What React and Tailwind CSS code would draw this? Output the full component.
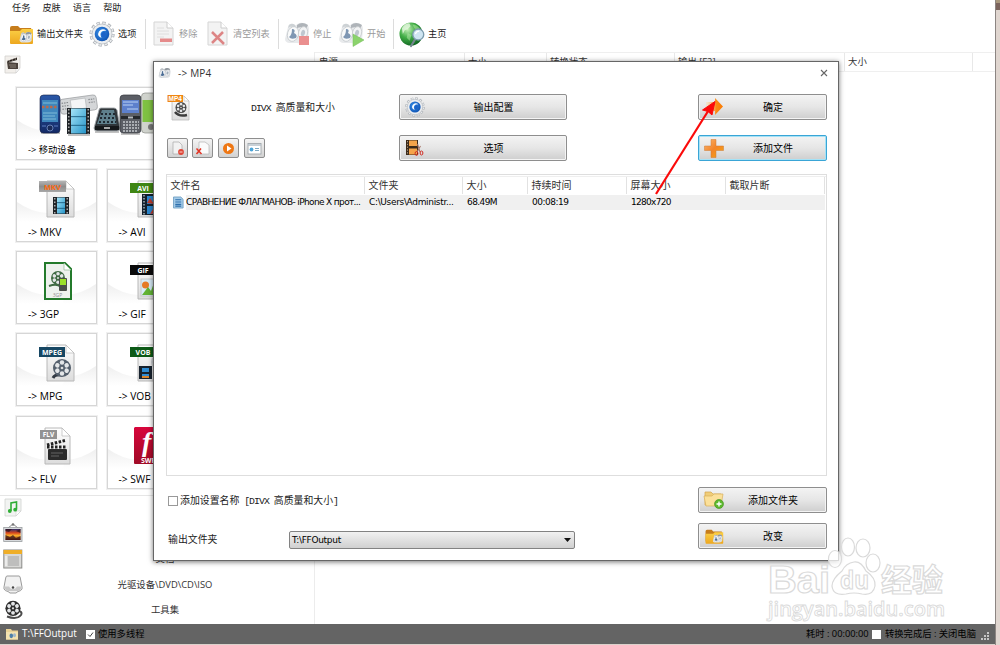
import React from 'react';
import clsx from 'clsx';

const uiFont = "font-['Open_Sans','Noto_Sans_CJK_SC',sans-serif]";
const monoFont = "font-['Liberation_Mono','Noto_Sans_CJK_SC',monospace]";
const tahomaFont = "font-['DejaVu_Sans','Noto_Sans_CJK_SC',sans-serif]";

/* ---------- Shared gradients ---------- */

const Gradients = () => (
  <svg className="absolute w-0 h-0" aria-hidden="true">
    <defs>
      <linearGradient id="folder" x1="0" y1="0" x2="0" y2="1">
        <stop offset="0" stopColor="#fbd046" />
        <stop offset="1" stopColor="#eda71f" />
      </linearGradient>
      <linearGradient id="orange" x1="0" y1="0" x2="1" y2="1">
        <stop offset="0" stopColor="#fbb873" />
        <stop offset="0.5" stopColor="#f3852a" />
        <stop offset="1" stopColor="#f5a80c" />
      </linearGradient>
      <linearGradient id="arrow" x1="0" y1="0" x2="1" y2="0">
        <stop offset="0" stopColor="#ffd9a0" stopOpacity="0.3" />
        <stop offset="0.6" stopColor="#fb8a14" />
        <stop offset="1" stopColor="#fb7a00" />
      </linearGradient>
      <linearGradient id="page" x1="0" y1="0" x2="0" y2="1">
        <stop offset="0" stopColor="#ffffff" />
        <stop offset="1" stopColor="#dcdcdc" />
      </linearGradient>
      <linearGradient id="hill" x1="0" y1="0" x2="0" y2="1">
        <stop offset="0" stopColor="#efefef" />
        <stop offset="1" stopColor="#ffffff" />
      </linearGradient>
      <linearGradient id="film" x1="0" y1="0" x2="1" y2="1">
        <stop offset="0" stopColor="#a5e4f8" />
        <stop offset="1" stopColor="#2795c9" />
      </linearGradient>
      <linearGradient id="red" x1="0" y1="0" x2="0" y2="1">
        <stop offset="0" stopColor="#d8063c" />
        <stop offset="1" stopColor="#a00b26" />
      </linearGradient>
      <linearGradient id="sunset" x1="0" y1="0" x2="0" y2="1">
        <stop offset="0" stopColor="#2d2e6c" />
        <stop offset="0.35" stopColor="#d8461c" />
        <stop offset="0.6" stopColor="#fbb02c" />
        <stop offset="1" stopColor="#7a1a0c" />
      </linearGradient>
      <radialGradient id="globe" cx="0.35" cy="0.3" r="0.8">
        <stop offset="0" stopColor="#c4efb8" />
        <stop offset="0.45" stopColor="#41ad46" />
        <stop offset="1" stopColor="#08591b" />
      </radialGradient>
      <radialGradient id="blue" cx="0.4" cy="0.4" r="0.7">
        <stop offset="0" stopColor="#3a93ea" />
        <stop offset="1" stopColor="#0a4cae" />
      </radialGradient>
      <linearGradient id="navy" x1="0" y1="0" x2="0" y2="1">
        <stop offset="0" stopColor="#2a58a8" />
        <stop offset="1" stopColor="#142a66" />
      </linearGradient>
      <linearGradient id="metal" x1="0" y1="0" x2="0" y2="1">
        <stop offset="0" stopColor="#b5b5b5" />
        <stop offset="0.5" stopColor="#8d8d8d" />
        <stop offset="1" stopColor="#a8a8a8" />
      </linearGradient>
    </defs>
  </svg>
);

/* ---------- Icons ---------- */

const FactoryShape = () => (
  <>
    <path d="M1 18 4 6Q5 2 9 3L11 6Q14 1 19 2Q25 3 25 8L24 19Q20 23 13 22L5 22Q1 21 1 18Z" fill="#dfe2e5" />
    <path d="M5 4Q9 1 12 5L10 7Q7 4 4 7Z" fill="#b9bfc4" />
    <path d="M13 4Q18 0 24 4L22 8Q18 5 13 7Z" fill="#8e959c" />
    <ellipse cx="9" cy="13" rx="5.500" ry="7.500" fill="#f7f8f9" stroke="#a6acb2" strokeWidth="0.7" transform="rotate(15 9 13)" />
    <path d="M8 8Q12 8 10 12Q14 14 12 17Q7 19 5 16Q8 14 8 8Z" fill="#4a6c94" />
    <ellipse cx="19" cy="12" rx="4.500" ry="6.500" fill="#eef0f2" stroke="#abb0b5" strokeWidth="0.7" transform="rotate(15 19 12)" />
    <ellipse cx="19" cy="12" rx="2" ry="3.200" fill="#a5b0bc" transform="rotate(15 19 12)" />
  </>
);

const FactoryIcon = ({ size = 26, badge, faded }) => (
  <svg width={size} height={size} viewBox="0 0 26 26">
    <g opacity={faded ? 0.7 : 1}><FactoryShape /></g>
    {badge === 'stop' && <rect x="15" y="15" width="10" height="9" fill="#ea8f8f" />}
    {badge === 'start' && <path d="M15 13 26 19 15 25.500Z" fill="#8bd36c" stroke="#74bd58" strokeWidth="0.5" />}
  </svg>
);

const FolderIcon = ({ width = 26, height = 26 }) => (
  <svg width={width} height={height} viewBox="0 0 26 26">
    <path d="M2 7Q2 5 4 5H10L12 7H23L24 10V20H2Z" fill="#c67d1c" />
    <path d="M2 10H12L14 8H25V22Q25 23 24 23H3Q2 23 2 22Z" fill="url(#folder)" />
    <g transform="translate(11 10) scale(0.52)"><FactoryShape /></g>
  </svg>
);

const GearIcon = ({ size = 26 }) => (
  <svg width={size} height={size} viewBox="0 0 26 26">
    <circle cx="13" cy="13" r="11" fill="none" stroke="#a6abb1" strokeWidth="3.200" strokeDasharray="3.200 2.560" />
    <circle cx="13" cy="13" r="11" fill="none" stroke="#e9ebed" strokeWidth="1.800" strokeDasharray="2.200 3.560" strokeDashoffset="-0.5" />
    <circle cx="13" cy="13" r="10" fill="#eceef0" stroke="#b9bec3" strokeWidth="0.8" />
    <circle cx="13" cy="13" r="7.300" fill="url(#blue)" />
    <path d="M17.500 9.500Q13 6.500 10 10.500Q7.500 15 12.500 17Q9 9.500 17.500 9.500Z" fill="#ffffff" />
    <path d="M12 13Q15 8 17 13Q16 17 13 16Z" fill="#1c63c8" />
  </svg>
);

const RemoveIcon = () => (
  <svg width="26" height="26" viewBox="0 0 26 26">
    <path d="M4 1H17L23 7V24H4Z" fill="#f3f3f3" stroke="#d5d5d5" />
    <path d="M17 1V7H23" fill="#ffffff" stroke="#cccccc" />
    <path d="M7 7H14M7 10H19M7 13H19M7 16H14" stroke="#dedede" />
    <rect x="10" y="17.500" width="12" height="3.500" fill="#e58b8b" />
  </svg>
);

const ClearIcon = () => (
  <svg width="26" height="26" viewBox="0 0 26 26">
    <path d="M4 1H17L23 7V24H4Z" fill="#f3f3f3" stroke="#d5d5d5" />
    <path d="M17 1V7H23" fill="#ffffff" stroke="#cccccc" />
    <path d="M8 11 20 23M19 11 8 22" stroke="#dd8585" strokeWidth="2.500" />
  </svg>
);

const GlobeIcon = () => (
  <svg width="27" height="27" viewBox="0 0 27 27">
    <circle cx="12.500" cy="13" r="12" fill="url(#globe)" />
    <path d="M3 7Q7 1 11 2L12 5L9 8L6 9L4 13Z" fill="#e6f8e0" opacity="0.8" />
    <path d="M14 3Q19 3 22 8L19 9L16 7Z" fill="#a8e59a" opacity="0.6" />
    <path d="M9 12 13 14 11 20 8 17Z" fill="#b8ecac" opacity="0.5" />
    <path d="M17 18 12.500 25.500" stroke="#74848f" strokeWidth="2.200" strokeLinecap="round" />
    <circle cx="20" cy="13.500" r="5.700" fill="#cfe5f2" stroke="#7d9cae" strokeWidth="1.400" />
    <path d="M17 13Q18 10 21 10" stroke="#ffffff" strokeWidth="1.200" fill="none" />
  </svg>
);

const Reel = ({ cx, cy, r, color = '#333333' }) => (
  <g transform={`translate(${cx} ${cy}) scale(${r / 10})`}>
    <circle r="10" fill={color} />
    {[0, 60, 120, 180, 240, 300].map((a) => (
      <circle key={a} r="2.500" cy="-6" fill="#e4e6e8" transform={`rotate(${a})`} />
    ))}
    <circle r="1.500" fill="#dddddd" />
  </g>
);

const Film = ({ x, y, w, h }) => (
  <g>
    <rect x={x} y={y} width={w} height={h} fill="#202428" />
    <path d={`M${x + 1.8} ${y + 1}V${y + h}M${x + w - 1.8} ${y + 1}V${y + h}`} stroke="#d0d0d0" strokeWidth="1.200" strokeDasharray="1.500 2" />
    <rect x={x + 4} y={y + 0.5} width={w - 8} height={h - 1} fill="url(#film)" />
    <path d={`M${x + 4} ${y + h / 3}H${x + w - 4}M${x + 4} ${y + (h * 2) / 3}H${x + w - 4}`} stroke="#1b5d80" strokeWidth="0.900" />
  </g>
);

const Mp4Icon = () => (
  <svg width="24" height="28" viewBox="0 0 24 28">
    <path d="M6 2H18L23 7V26H6Z" fill="url(#page)" stroke="#bdbdbd" strokeWidth="0.8" />
    <path d="M18 2V7H23Z" fill="#ffffff" stroke="#bbbbbb" strokeWidth="0.6" />
    <Reel cx={15} cy={13.5} r={5.5} color="#444444" />
    <path d="M9 18Q13 23 21 21" stroke="#3c3c3c" strokeWidth="2.500" fill="none" />
    <rect x="1.500" y="1" width="15.500" height="7" fill="#ef8613" />
    <text x="9.200" y="7" textAnchor="middle" fontSize="6.500" fontWeight="bold" fill="#ffffff" fontFamily="Liberation Sans, sans-serif">MP4</text>
  </svg>
);

const ClapperIcon = () => (
  <svg width="18" height="19" viewBox="0 0 18 19">
    <path d="M1 1H16V13L12 18H1Z" fill="#f2efeb" stroke="#d2d0cd" strokeWidth="0.8" />
    <path d="M12 18V13H16Z" fill="#ffffff" stroke="#cccccc" strokeWidth="0.6" />
    <path d="M3 7 14 8V14H4Z" fill="#4b423c" />
    <path d="M3 6 13 2.500V5L4 7.500Z" fill="#2b2521" />
    <path d="M5 5 6 7M8 4 9 6M11 3 12 5M5 10H12M6 12H12" stroke="#a69b90" strokeWidth="0.700" />
  </svg>
);

const MusicIcon = () => (
  <svg width="18" height="19" viewBox="0 0 18 19">
    <path d="M1 1H17V13L12 18H1Z" fill="#f2f4f2" stroke="#d0d3d0" strokeWidth="0.8" />
    <path d="M12 18V13H17Z" fill="#ffffff" stroke="#cccccc" strokeWidth="0.6" />
    <path d="M7 13V5L12.500 4V11.500" stroke="#2fae35" strokeWidth="1.600" fill="none" />
    <circle cx="5.800" cy="13" r="1.900" fill="#2fae35" />
    <circle cx="11.200" cy="11.700" r="1.900" fill="#2fae35" />
  </svg>
);

const PictureIcon = () => (
  <svg width="20" height="20" viewBox="0 0 20 20">
    <path d="M5 5 10 1 15 5" stroke="#8a8a8a" fill="none" />
    <circle cx="10" cy="1.500" r="1.300" fill="#777777" />
    <rect x="0.700" y="4.500" width="18.300" height="14" fill="#d7dadd" stroke="#9a9da0" strokeWidth="0.8" />
    <rect x="2.500" y="6" width="15" height="11" fill="url(#sunset)" />
    <path d="M2.500 6H9L6 9L2.500 8ZM17.500 6V10L13 8ZM2.500 17V12L7 14L10 12L13 15L17.500 13V17Z" fill="#2c1018" opacity="0.7" />
  </svg>
);

const DocumentIcon = () => (
  <svg width="20" height="20" viewBox="0 0 20 20">
    <rect x="0.800" y="1" width="18" height="18" fill="#d9d9d7" stroke="#8b8b88" />
    <rect x="0.500" y="1" width="18.500" height="4" fill="#efae28" />
    <path d="M5 8H16M5 10H16M5 12H16M5 14H16M5 16H16" stroke="#b5b5b5" strokeWidth="1.300" />
    <path d="M3 7V17" stroke="#ffffff" />
  </svg>
);

const DriveIcon = () => (
  <svg width="20" height="19" viewBox="0 0 20 19">
    <path d="M4 1H16Q17 1 17.300 3L19 12V14Q18 16 15 16.500L13 18H7L5 16.500Q2 16 1 14V12L2.700 3Q3 1 4 1Z" fill="#f1f1f1" stroke="#9a9a9a" />
    <path d="M1.500 11.500H6Q7 14 10 14T14 11.500H18.500V14L15 16H5L1.500 14Z" fill="#c9c9c9" />
    <circle cx="10" cy="12.500" r="1.200" fill="#444444" />
  </svg>
);

const ToolsetIcon = () => (
  <svg width="20" height="20" viewBox="0 0 20 20">
    <path d="M14 11Q20 11 18 15Q14 20 4 16.500" stroke="#4c4c4c" strokeWidth="2" fill="none" />
    <Reel cx={10} cy={8.3} r={7.6} color="#2e2e2e" />
  </svg>
);

/* ---------- Format artwork, drawn on a 79x54 tile ---------- */

const Hills = ({ width = 79 }) => (
  <>
    <path d="M0 32Q14 42 30 43L34 52H0Z" fill="url(#hill)" />
    <path d={`M${width} 32Q${width - 14} 42 ${width - 30} 43L${width - 34} 52H${width}Z`} fill="url(#hill)" />
  </>
);

const Sheet = ({ x = 30, w = 27, fill = 'url(#page)', stroke = '#b8b8b8' }) => (
  <>
    <path d={`M${x} 11H${x + w - 8}L${x + w} 19V47H${x}Z`} fill={fill} stroke={stroke} strokeWidth="1" />
    <path d={`M${x + w - 8} 11V19H${x + w}Z`} fill="#ffffff" stroke={stroke} strokeWidth="0.700" />
  </>
);

const Banner = ({ label, fill, color = '#ffffff', x = 22, y = 13, w = 26, h = 10, size = 7 }) => (
  <>
    <rect x={x} y={y} width={w} height={h} fill={fill} />
    <text x={x + w / 2} y={y + h - 2.4} textAnchor="middle" fontSize={size} fontWeight="bold" fill={color} fontFamily="Open Sans, sans-serif">
      {label}
    </text>
  </>
);

const MkvArt = () => (
  <>
    <Sheet />
    <Film x={36} y={27} w={16} h={17} />
    <Banner label="MKV" fill="url(#metal)" color="#ff6a10" y={11} w={27} h={11} size={7.5} />
  </>
);

const AviArt = () => (
  <>
    <Sheet />
    <rect x="34" y="24" width="22" height="21" fill="#14202c" />
    <path d="M36 25V45" stroke="#a8b4bc" strokeWidth="1.500" strokeDasharray="1.500 1.500" />
    <path d="M39 26H54V34H39ZM39 36H54V44H39Z" fill="#2b86cc" />
    <path d="M39 33 42 28 46 34ZM42 44 45 39 48 43Z" fill="#c23b2b" />
    <Banner label="AVI" fill="#3f8614" />
  </>
);

const ThreeGpArt = () => (
  <>
    <path d="M28 11H48L54 17V47H28Z" fill="#eef2ee" stroke="#237a2b" strokeWidth="2" />
    <path d="M47 11V18H54Z" fill="#ffffff" stroke="#8fb893" strokeWidth="0.700" />
    <Reel cx={41} cy={26} r={7} color="#3f6b43" />
    <path d="M32 34Q40 31 44 35" stroke="#3f6b43" strokeWidth="2" fill="none" />
    <rect x="42" y="26" width="8" height="13" rx="1" fill="#4a4f4a" />
    <rect x="43" y="27" width="6" height="6" fill="#9be02a" />
    <text x="40.500" y="44.500" textAnchor="middle" fontSize="5" fill="#8e8e8e" fontFamily="Open Sans, sans-serif">3GP</text>
  </>
);

const GifArt = () => (
  <>
    <Sheet />
    <rect x="33" y="27" width="23" height="17" fill="#d8ecf8" stroke="#c8c8c8" />
    <circle cx="37.500" cy="33" r="3.500" fill="#e67a26" />
    <path d="M34 43 40 35 43 39 47 28 52 43Z" fill="#62b334" />
    <Banner label="GIF" fill="#0a0a0a" />
  </>
);

const MpgArt = () => (
  <>
    <Sheet />
    <path d="M36 44Q38 40 45 41" stroke="#333a44" strokeWidth="3" fill="none" />
    <Reel cx={45} cy={34} r={9} color="#55606d" />
    <Banner label="MPEG" fill="#174763" />
  </>
);

const VobArt = () => (
  <>
    <Sheet />
    <Reel cx={50} cy={28} r={7} color="#c9ccd0" />
    <rect x="31" y="32" width="13" height="13" fill="#17222e" />
    <path d="M34 34H41V38H34ZM34 40H41V44H34Z" fill="#2d8bd2" />
    <path d="M34 42H41V44H34Z" fill="#d8842c" />
    <Banner label="VOB" fill="#0d5a17" />
  </>
);

const FlvArt = () => (
  <>
    <Sheet x={28} w={25} />
    <rect x="31" y="32" width="19" height="11" rx="1" fill="#2b2b2b" />
    <path d="M30 30H50" stroke="#222222" strokeWidth="3" strokeDasharray="2.500 1.500" />
    <path d="M30 28 48 23.500" stroke="#222222" strokeWidth="3" strokeDasharray="2.500 1.500" />
    <path d="M34 36H46M34 39H42" stroke="#8b8b8b" strokeWidth="0.600" />
    <Banner label="FLV" fill="#929292" x={23} y={13} w={17} h={9} size={6.5} />
  </>
);

const SwfArt = () => (
  <>
    <path d="M27 10H48L56 18V47H27Q26 47 26 46V11Z" fill="url(#red)" />
    <text x="34" y="34" fontSize="28" fontStyle="italic" fontWeight="bold" fill="#ffffff" fontFamily="Liberation Serif, serif">f</text>
    <text x="33" y="45.500" fontSize="7" fontWeight="bold" fill="#ffffff" fontFamily="Open Sans, sans-serif">SWF</text>
  </>
);

const DevicesArt = () => (
  <>
    <path d="M24 45H43M51 47H73M78 44H102M104 46H123" stroke="#9a9a9a" strokeWidth="2" opacity="0.6" />
    <g transform="rotate(-8 62 17)">
      <rect x="43" y="9" width="37" height="15" rx="3" fill="#d4d6d8" stroke="#999c9f" strokeWidth="0.700" />
      <rect x="54" y="11" width="15" height="10" fill="#f4f5f6" stroke="#a2a5a8" strokeWidth="0.500" />
      <path d="M45 13H52M45 16H52M45 19H52M72 13H78M72 16H78" stroke="#8a8d90" strokeWidth="1.200" strokeDasharray="1.500 1" />
    </g>
    <rect x="23" y="7" width="20" height="38" rx="3.500" fill="url(#navy)" stroke="#101d40" strokeWidth="0.600" />
    <rect x="25" y="12" width="16" height="22" fill="#3f87bd" />
    <path d="M25 19H41" stroke="#b9694c" strokeWidth="2.500" strokeDasharray="2.500 1.500" />
    <path d="M26 15H40M26 25H40M26 28H38M26 31H39" stroke="#8fcae0" strokeWidth="0.800" />
    <circle cx="33" cy="40" r="3" fill="#1b2b58" stroke="#87a2d8" strokeWidth="0.700" />
    <path d="M25 38H29M37 38H41" stroke="#5d7cc0" />
    <Film x={50} y={20} w={23} h={26} />
    <path d="M84 20H97Q99 20 100 22L103 40Q103 43 100 43H80Q77 43 77 40L82 22Q82 20 84 20Z" fill="#30363a" stroke="#a3a8ac" strokeWidth="0.900" />
    <path d="M85 22H97L99.500 36H80Z" fill="#5f808c" />
    <path d="M84 26H98M83 30H99M82 34H99" stroke="#202a32" strokeWidth="1.800" strokeDasharray="2 2" />
    <path d="M78 38H102V42H78Z" fill="#16191b" />
    <path d="M87 40H93" stroke="#d8d8d8" strokeWidth="1.500" />
    <rect x="103" y="7" width="21" height="38" rx="3.500" fill="#5b5e65" stroke="#34373c" strokeWidth="0.700" />
    <rect x="105" y="12" width="17" height="13" fill="#5d80cc" />
    <path d="M106 14H121M106 17H116M110 21H121" stroke="#c5dbf8" strokeWidth="0.900" />
    <path d="M104 28H123V31H104Z" fill="#25282c" />
    <path d="M111 29.500H116" stroke="#b5b8bc" strokeWidth="2" />
    <path d="M106 34H122M106 37H122M106 40H122M106 43H120" stroke="#c4c7cb" strokeWidth="1.500" strokeDasharray="2 1" />
    <rect x="124.500" y="5" width="20" height="40" rx="3.500" fill="#d0d3cd" stroke="#8a8d88" strokeWidth="0.700" />
    <rect x="125.500" y="12" width="17" height="22" fill="#7fc242" />
    <circle cx="134" cy="39" r="3" fill="#777777" />
  </>
);

const formats = [
  { name: 'MKV', Art: MkvArt },
  { name: 'AVI', Art: AviArt },
  { name: '3GP', Art: ThreeGpArt },
  { name: 'GIF', Art: GifArt },
  { name: 'MPG', Art: MpgArt },
  { name: 'VOB', Art: VobArt },
  { name: 'FLV', Art: FlvArt },
  { name: 'SWF', Art: SwfArt },
];

const FormatCard = ({ name, Art, wide }) => (
  <div className={clsx('border border-[#d6d6d6] outline outline-[#f0f0f0] bg-white overflow-hidden', wide && 'col-span-2')}>
    <svg className="block" width={wide ? 170 : 79} height="54">
      <Hills width={wide ? 250 : 79} />
      <Art />
    </svg>
    <p className={clsx('pl-[11px] leading-4 text-black whitespace-nowrap', wide ? 'text-[9.3px]' : 'text-[10.2px]')}>-&gt; {name}</p>
  </div>
);

/* ---------- Main window ---------- */

const MenuBar = () => (
  <nav className="h-4 pl-3 flex items-center gap-3 text-[9.2px] leading-none text-[#222]">
    {['任务', '皮肤', '语言', '帮助'].map((item) => (
      <span key={item} className="pb-px">{item}</span>
    ))}
  </nav>
);

const ToolItem = ({ icon, label, className, disabled }) => (
  <div className={clsx('flex items-center gap-[3px] flex-shrink-0', className)}>
    <span className="w-[26px] flex justify-center flex-shrink-0">{icon}</span>
    <span className={clsx('text-[9.2px] leading-none whitespace-nowrap', disabled ? 'text-[#999]' : 'text-[#1a1a1a]')}>{label}</span>
  </div>
);

const Separator = () => <div className="w-px h-[30px] bg-[#dcdcdc] flex-shrink-0" />;

const Toolbar = () => (
  <div className="h-9 pl-2 flex items-center">
    <ToolItem className="w-[81px]" icon={<FolderIcon />} label="输出文件夹" />
    <ToolItem className="w-14" icon={<GearIcon />} label="选项" />
    <Separator />
    <ToolItem className="ml-1 w-[54px]" icon={<RemoveIcon />} label="移除" disabled />
    <ToolItem className="w-[74px]" icon={<ClearIcon />} label="清空列表" disabled />
    <Separator />
    <ToolItem className="ml-[5px] w-[54px]" icon={<FactoryIcon badge="stop" faded />} label="停止" disabled />
    <ToolItem className="w-[55px]" icon={<FactoryIcon badge="start" faded />} label="开始" disabled />
    <Separator />
    <ToolItem className="ml-[5px]" icon={<GlobeIcon />} label="主页" />
  </div>
);

const sections = [
  { icon: <MusicIcon />, label: '' },
  { icon: <PictureIcon />, label: '' },
  { icon: <DocumentIcon />, label: '文档' },
  { icon: <DriveIcon />, label: '光驱设备\\DVD\\CD\\ISO' },
  { icon: <ToolsetIcon />, label: '工具集' },
];

const Sidebar = () => (
  <aside className="w-[315px] flex-shrink-0 flex flex-col border-r border-[#ececec]">
    <div className="h-[34.7px] pl-1 pt-[3px]"><ClapperIcon /></div>
    <div className="h-[408px] pl-4 grid grid-cols-[81px_81px] auto-rows-[73px] gap-x-[9.5px] gap-y-[9.25px]">
      <FormatCard name="移动设备" Art={DevicesArt} wide />
      {formats.map((f) => (
        <FormatCard key={f.name} {...f} />
      ))}
    </div>
    <div className="border-t border-[#e6e6e6] flex-1 flex flex-col">
      {sections.map(({ icon, label }, i) => (
        <div key={i} className={clsx('flex items-center', i === 0 ? 'h-[24.6px]' : 'h-[25.6px]')}>
          <span className="w-5 ml-[3px] flex justify-center">{icon}</span>
          <span className="flex-1 text-center pr-[7px] text-[9.4px] leading-none text-[#333]">{label}</span>
        </div>
      ))}
    </div>
  </aside>
);

const queueColumns = [
  { label: '电源', className: 'w-[149px]' },
  { label: '大小', className: 'w-[82px]' },
  { label: '转换状态', className: 'w-[128px]' },
  { label: '输出 [F2]', className: 'w-[170px]' },
  { label: '大小', className: 'w-[128px]' },
];

const Queue = () => (
  <div className="flex-1">
    <div className="h-5 flex border-y border-[#efefef] text-[9.4px] leading-[17px] text-[#333]">
      {queueColumns.map(({ label, className }, i) => (
        <div key={i} className={clsx('border-r border-[#e8e8e8] pl-[3px] flex-shrink-0', className, i === 0 && 'ml-px')}>{label}</div>
      ))}
    </div>
  </div>
);

const StatusBar = () => (
  <footer className="h-5 bg-[#646464] flex items-center pl-[5px] pr-1 text-[9.3px] leading-none text-black">
    <svg width="14" height="14" viewBox="0 0 14 14">
      <path d="M1 2H6L7 3.500H13V12.500H1Z" fill="#e9d296" />
      <path d="M1 5H13V12.500H1Z" fill="#f3e2b0" />
      <ellipse cx="6.300" cy="8.800" rx="1.800" ry="2.400" fill="#4d7fa8" />
      <ellipse cx="9.500" cy="8.300" rx="1.500" ry="2" fill="#9db7ca" />
    </svg>
    <span className="ml-[3px] w-[61px] text-[9.9px] text-white">T:\FFOutput</span>
    <span className="ml-[3px] w-[9px] h-[9px] bg-white flex items-center justify-center">
      <svg width="7" height="7" viewBox="0 0 7 7"><path d="M1 3.500 3 5.500 6 1.500" stroke="#444" fill="none" /></svg>
    </span>
    <span className="ml-[3px]">使用多线程</span>
    <span className="ml-auto w-[66px] whitespace-nowrap">耗时 : 00:00:00</span>
    <span className="w-[9px] h-[9px] bg-white" />
    <span className="ml-1 w-[95px] whitespace-nowrap">转换完成后 : 关闭电脑</span>
    <svg className="mt-1" width="11" height="10" viewBox="0 0 11 10">
      <path d="M7 1H9V3H7ZM4 4H6V6H4ZM7 4H9V6H7ZM1 7H3V9H1ZM4 7H6V9H4ZM7 7H9V9H7Z" fill="#c6c6c6" />
    </svg>
  </footer>
);

/* ---------- Dialog ---------- */

const PushButton = ({ icon, label, className, active }) => (
  <button
    className={clsx(
      'h-[26px] flex-shrink-0 flex items-center rounded-[2px] border bg-linear-to-b from-[#f3f3f3] from-0% via-[#e6e6e6] via-50% to-[#cecece]',
      active ? 'border-[#3aa5d6] shadow-[inset_0_0_0_1px_#a5e2f6]' : 'border-[#8e8e8e] shadow-[inset_0_0_0_1px_#f4f4f4]',
      className
    )}
  >
    <span className="w-[22px] ml-1 flex justify-center flex-shrink-0">{icon}</span>
    <span className="flex-1 text-center pr-[5px] text-[10px] leading-none text-black">{label}</span>
  </button>
);

const OkIcon = () => (
  <svg width="20" height="20" viewBox="0 0 20 20">
    <path d="M2 5H11V1L19 9.500L11 18V14H2Z" fill="url(#arrow)" />
  </svg>
);

const PlusIcon = () => (
  <svg width="22" height="21" viewBox="0 0 22 21">
    <path d="M8 1.500H13V8H20.500V12.500H13V19.500H8V12.500H1.500V8H8Z" fill="url(#orange)" stroke="#cc7a35" strokeWidth="0.500" />
  </svg>
);

const CutFilmIcon = () => (
  <svg width="20" height="18" viewBox="0 0 20 18">
    <rect x="1" y="1" width="12" height="15" fill="#3c2a1a" />
    <path d="M4 1.500H12V7H4ZM4 9.500H12V15.500H4Z" fill="#f5a44a" />
    <path d="M2.500 2V16" stroke="#b5a590" strokeWidth="0.900" strokeDasharray="1.300 1.500" />
    <path d="M12.500 5 15 13M15.500 7 12 13" stroke="#a8786c" strokeWidth="1.100" />
    <ellipse cx="11.500" cy="14.500" rx="1.400" ry="2" fill="none" stroke="#d22a20" />
    <ellipse cx="16.500" cy="14" rx="1.400" ry="2" fill="none" stroke="#d22a20" />
  </svg>
);

const AddFolderIcon = () => (
  <svg width="22" height="20" viewBox="0 0 22 20">
    <path d="M2 2H8L10 4H18V15H2Z" fill="#f0cd78" stroke="#d3a54a" strokeWidth="0.700" />
    <path d="M1 6H9L11 4H20L18 16H3Z" fill="#fbe09a" stroke="#d9b05a" strokeWidth="0.700" />
    <circle cx="16" cy="14" r="4.500" fill="#5cb82c" stroke="#3f8e1c" strokeWidth="0.600" />
    <path d="M13.500 14H18.500M16 11.500V16.500" stroke="#ffffff" strokeWidth="1.400" />
  </svg>
);

const MiniButton = ({ children }) => (
  <button className="w-[21px] h-5 flex items-center justify-center rounded-[2px] border border-[#8e8e8e] bg-linear-to-b from-[#f4f4f4] to-[#d2d2d2]">
    <svg width="17" height="17" viewBox="0 0 17 17">{children}</svg>
  </button>
);

const MiniToolbar = () => (
  <div className="flex w-[232px]">
    <MiniButton>
      <path d="M4 2H10L13 5V14H4Z" fill="#f2f2f2" stroke="#aaaaaa" strokeWidth="0.700" />
      <circle cx="12" cy="12" r="2.900" fill="#e04637" />
      <path d="M10.500 12H13.500" stroke="#fad6d0" />
    </MiniButton>
    <span className="w-1" />
    <MiniButton>
      <path d="M5 2H11L15 5V14H5Z" fill="#fbfbfb" stroke="#b5b5b5" strokeWidth="0.700" />
      <path d="M2.500 8.500 7.500 14M7 8.500 2.500 14" stroke="#e23324" strokeWidth="1.500" />
    </MiniButton>
    <span className="w-[5px]" />
    <MiniButton>
      <circle cx="8.500" cy="8.500" r="5.500" fill="#ee7714" />
      <path d="M7 5.500 11.500 8.500 7 11.500Z" fill="#ffffff" />
    </MiniButton>
    <span className="w-[5px]" />
    <MiniButton>
      <rect x="2" y="3.500" width="13" height="10.500" fill="#ffffff" stroke="#a0a7ac" strokeWidth="0.900" />
      <path d="M2 5H15" stroke="#b6c1c8" strokeWidth="1.500" />
      <circle cx="5.500" cy="9.500" r="1.900" fill="#4ba4d8" />
      <path d="M9 8.500H13M9 10.500H13" stroke="#7daac4" />
    </MiniButton>
  </div>
);

const fileColumns = [
  { label: '文件名', width: 'w-[198px]' },
  { label: '文件夹', width: 'w-[98px]' },
  { label: '大小', width: 'w-[65px]' },
  { label: '持续时间', width: 'w-[99px]' },
  { label: '屏幕大小', width: 'w-[99px]' },
  { label: '截取片断', width: 'w-[99px]' },
];

const FileTable = () => (
  <div className="mt-[13px] ml-3 w-[661px] h-[302px] border border-[#dedede] bg-white pt-px">
    <div className="h-[18px] flex border-t border-[#efefef] text-[10px] leading-4 text-[#333]">
      {fileColumns.map(({ label, width }) => (
        <div key={label} className={clsx('border-r border-[#e2e2e2] pl-[3.5px]', width)}>{label}</div>
      ))}
    </div>
    <div className={clsx('w-[658px] h-[15px] mt-px bg-[#f0f0f0] flex items-center text-[9px] leading-none text-black whitespace-nowrap', tahomaFont)}>
      <span className="w-[19px] h-[15px] pl-1.5 bg-white flex items-center">
        <svg width="11" height="13" viewBox="0 0 12 13">
          <path d="M0.500 0.500H8.500L11 3V12.500H0.500Z" fill="#a5cbe8" stroke="#72a1c4" />
          <path d="M2.500 3.500H9M2.500 6H9M2.500 8.500H9M2.500 10.500H9" stroke="#2e70ac" strokeWidth="1.200" />
        </svg>
      </span>
      <span className="w-[183px] tracking-[-0.64px]">СРАВНЕНИЕ ФЛАГМАНОВ- iPhone X прот...</span>
      <span className="w-[98px] tracking-[-0.33px]">C:\Users\Administr...</span>
      <span className="w-[65px] tracking-[-0.6px]">68.49M</span>
      <span className="w-[99px] tracking-[-0.5px]">00:08:19</span>
      <span className="tracking-[-0.7px]">1280x720</span>
    </div>
  </div>
);

const Dialog = () => (
  <div className="absolute left-[153px] top-[61px] w-[686px] h-[500px] bg-white border border-[#666] shadow-[0_1px_5px_rgba(0,0,0,0.55)]">
    <div className="h-[22px] pl-1 pr-[10px] flex items-center text-[10px] leading-none text-[#333]">
      <FactoryIcon size={13} />
      <span className="ml-[7px] tracking-[0.2px]">-&gt; MP4</span>
      <svg className="ml-auto" width="8" height="8" viewBox="0 0 8 8"><path d="M1 1 7 7M7 1 1 7" stroke="#666" strokeWidth="1.100" /></svg>
    </div>

    <div className="mt-[10px] pl-3 flex items-start">
      <div className="w-[85px]"><Mp4Icon /></div>
      <p className={clsx('w-[148px] mt-[9px] text-[9.9px] leading-3 text-[#222] whitespace-nowrap', monoFont)}>
        <span className="tracking-[-1px]">DIVX </span>高质量和大小
      </p>
      <PushButton className="w-[168px]" icon={<GearIcon size={20} />} label="输出配置" />
      <PushButton className="ml-[131px] w-[129px]" icon={<OkIcon />} label="确定" />
    </div>

    <div className="mt-[13px] pl-[13px] flex items-center">
      <MiniToolbar />
      <PushButton className="w-[168px]" icon={<CutFilmIcon />} label="选项" />
      <PushButton className="ml-[131px] w-[129px]" icon={<PlusIcon />} label="添加文件" active />
    </div>

    <FileTable />

    <div className="mt-[11px] pl-[14px] flex items-center">
      <span className="mt-0.5 w-[10px] h-[10px] border border-[#999]" />
      <p className={clsx('ml-0.5 mt-1 w-[518px] text-[9.9px] leading-3 text-[#222] whitespace-nowrap', monoFont)}>
        添加设置名称<span className="tracking-[-1px]"> [DIVX </span>高质量和大小]
      </p>
      <PushButton className="w-[129px]" icon={<AddFolderIcon />} label="添加文件夹" />
    </div>

    <div className="mt-[10px] pl-[14px] flex items-center">
      <span className="w-[121px] mt-[7px] text-[9.9px] leading-none text-[#222]">输出文件夹</span>
      <div className={clsx('mt-2 w-[286px] h-[18px] pl-0.5 pr-[3px] flex items-center justify-between border border-[#828282] rounded-[2px] bg-linear-to-b from-[#f1f1f1] to-[#d0d0d0] text-[9px] leading-none tracking-[-0.3px] text-black', tahomaFont)}>
        T:\FFOutput
        <svg width="7" height="4" viewBox="0 0 7 4"><path d="M0 0H7L3.500 4Z" fill="#111" /></svg>
      </div>
      <PushButton className="ml-[123px] w-[129px]" icon={<FolderIcon width={20} height={20} />} label="改变" />
    </div>
  </div>
);

const PointerArrow = () => (
  <svg className="absolute left-[650px] top-[98px]" width="70" height="100" viewBox="0 0 70 100">
    <path d="M6 96 60 10" stroke="#fb0a0a" strokeWidth="2.200" />
    <path d="M65 3.500 62 17 58 13.500 52.500 12Z" fill="#fb0a0a" stroke="#fb0a0a" />
  </svg>
);

const Watermark = () => (
  <svg className="absolute left-[762px] top-[534px]" width="190" height="90" viewBox="0 0 190 90">
    <g fill="#ffffff" fillOpacity="0.75" stroke="#dadada" strokeWidth="1.200" fontFamily="Open Sans, Noto Sans CJK SC, sans-serif" fontWeight="bold">
      <text x="6" y="59" fontSize="38" fontFamily="Liberation Sans, sans-serif" textLength="62" lengthAdjust="spacingAndGlyphs">Bai</text>
      <ellipse cx="73" cy="25" rx="6.500" ry="8.500" />
      <ellipse cx="86" cy="13" rx="6.500" ry="9" />
      <ellipse cx="101" cy="14" rx="7" ry="9" />
      <ellipse cx="111" cy="29" rx="7" ry="9" />
      <path d="M92 28Q99 27 104 37Q114 44 113 52Q111 62 100 60Q92 58 84 60Q71 62 70 52Q70 45 80 37Q84 29 92 28Z" />
      <text x="78" y="55" fontSize="25" textLength="29" lengthAdjust="spacingAndGlyphs">du</text>
      <text x="119" y="57" fontSize="31" textLength="62" lengthAdjust="spacingAndGlyphs">经验</text>
      <text x="6" y="82" fontSize="20" strokeWidth="0.900" fontWeight="600" textLength="177" lengthAdjust="spacingAndGlyphs">jingyan.baidu.com</text>
    </g>
  </svg>
);

const App = () => (
  <div lang="zh-CN" className={clsx('relative w-[1000px] h-[645px] overflow-hidden bg-[#dcd2cc] flex', uiFont)}>
    <Gradients />
    <div className="w-[995px] flex flex-col">
      <div className="h-[624px] bg-white flex flex-col">
        <MenuBar />
        <Toolbar />
        <div className="flex-1 min-h-0 flex">
          <Sidebar />
          <Queue />
        </div>
      </div>
      <StatusBar />
    </div>
    <div className="flex-1 border-l border-[#8c8582] bg-[#e0d6d0]">
      <div className="h-[3px] bg-[#a9977c]" />
      <div className="h-[7px] bg-[#7b635c]" />
    </div>
    <Dialog />
    <PointerArrow />
    <Watermark />
  </div>
);

export default App;
